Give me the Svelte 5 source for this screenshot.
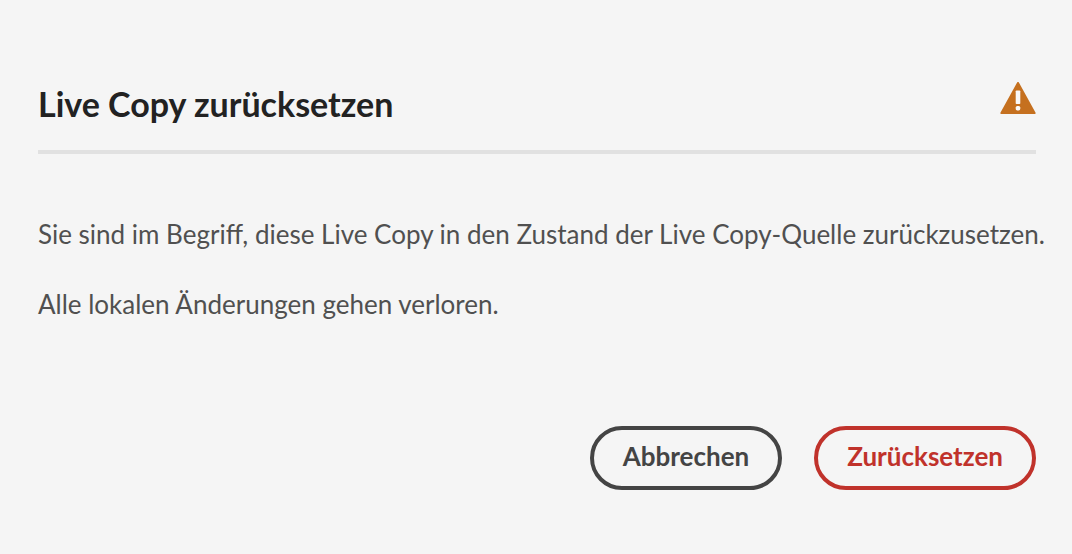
<script>
  let open = $state(true);
  const close = () => (open = false);
</script>

{#if open}
  <div class="dialog" role="alertdialog" aria-labelledby="title" aria-describedby="message">
    <header>
      <h1 id="title">Live Copy zurücksetzen</h1>
      <svg class="alert" viewBox="0 0 36 32" aria-hidden="true">
        <path d="M17.1 0.5 0.4 30.8A0.8 0.8 0 0 0 1.1 32H34.9A0.8 0.8 0 0 0 35.6 30.8L18.9 0.5A1 1 0 0 0 17.1 0.5Z" fill="#c5701f" />
        <rect x="15.7" y="8.5" width="4.6" height="13.5" rx="0.8" fill="#f9f9f9" />
        <rect x="15.7" y="24" width="4.6" height="4.4" rx="1.6" fill="#f9f9f9" />
      </svg>
    </header>
    <div class="message" id="message">
      <p>Sie sind im Begriff, diese Live Copy in den Zustand der Live Copy-Quelle zurückzusetzen.</p>
      <p>Alle lokalen Änderungen gehen verloren.</p>
    </div>
    <footer>
      <button type="button" onclick={close}>Abbrechen</button>
      <button type="button" class="warning" onclick={close}>Zurücksetzen</button>
    </footer>
  </div>
{/if}

<style>
  :global(body) {
    margin: 0;
    background: #f5f5f5;
  }
  .dialog {
    box-sizing: border-box;
    padding: 80px 36px 64px 38px;
    font-family: Lato, "Open Sans", sans-serif;
    color: #4b4b4b;
  }
  header {
    display: flex;
    justify-content: space-between;
    align-items: flex-start;
    padding-bottom: 22px;
    border-bottom: 4px solid #e1e1e1;
  }
  h1 {
    margin: 0;
    font-size: 34px;
    line-height: 48px;
    font-weight: 700;
    color: #222;
  }
  .alert {
    width: 36px;
    height: 32px;
    margin-top: 2px;
  }
  .message {
    display: grid;
    gap: 34px;
    padding: 62px 0 104px;
  }
  p {
    margin: 0;
    font-size: 26px;
    line-height: 36px;
    color: #505050;
  }
  @media (min-width: 1060px) {
    p {
      white-space: nowrap;
    }
  }
  footer {
    display: flex;
    justify-content: flex-end;
    gap: 32px;
  }
  button {
    height: 64px;
    padding: 0 29px 4px;
    border: 4px solid #444;
    border-radius: 32px;
    background: transparent;
    color: #444;
    font: 700 26px Lato, "Open Sans", sans-serif;
  }
  .warning {
    border-color: #c0322b;
    color: #c0322b;
  }
</style>
